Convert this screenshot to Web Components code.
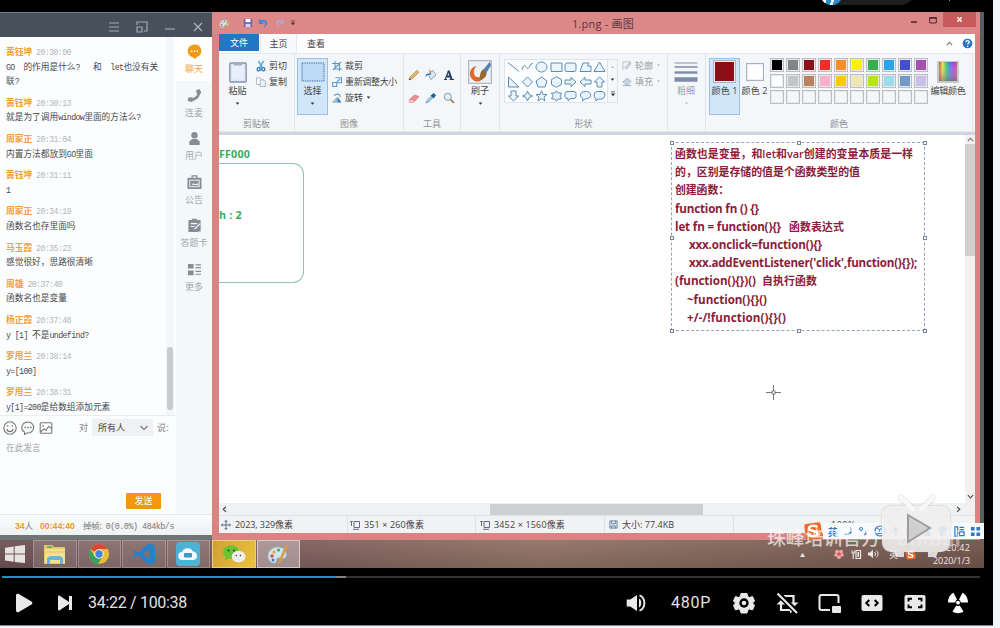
<!DOCTYPE html>
<html lang="zh-CN">
<head>
<meta charset="utf-8">
<title>课程回放</title>
<style>
html,body{margin:0;width:1000px;height:628px;overflow:hidden;background:#f3f4f8}
body{font-family:"Open Sans","Noto Sans CJK SC",sans-serif}
</style>
</head>
<body>
<video-player></video-player>
<script>
const make = (name, css, html) => customElements.define(name, class extends HTMLElement {
  constructor() {
    super();
    this.attachShadow({mode: 'open'});
  }
  connectedCallback() {
    if (this.shadowRoot.childNodes.length) return;
    const t = document.createElement('template');
    t.innerHTML = '<style>*{box-sizing:border-box}' + css + '</style>' + (typeof html === 'function' ? html(this) : html);
    this.shadowRoot.append(t.content.cloneNode(true));
  }
});

/* ---------- icons: [viewBox width, viewBox height, markup] ---------- */
const G = '#868d95', B = '#5b9ac9', W = '#e9e9e9', S = '#5a8db5';
const ICONS = {
  menu: [12,12,'<path d="M1 2h10M1 6h10M1 10h10" stroke="#a4a9b0" stroke-width="1.2"/>'],
  pop: [12,12,'<path d="M1 4V1h10v9H8M1 6h5v5H1z" fill="none" stroke="#a4a9b0" stroke-width="1.2"/>'],
  min: [12,12,'<path d="M1 8h10" stroke="#a4a9b0" stroke-width="1.2"/>'],
  close: [12,12,'<path d="M2 2l8 8M10 2l-8 8" stroke="#b4b8be" stroke-width="1.1"/>'],
  chat: [16,16,'<path d="M8 .5a7.3 6.9 0 0 1 2.7 13.3L8.5 16l-2.600-2A7.300 6.900 0 0 1 8 .5z" fill="#f09a1c"/><g fill="#fff"><circle cx="5" cy="7.500" r=".9"/><circle cx="8" cy="7.500" r=".9"/><circle cx="11" cy="7.500" r=".9"/></g>'],
  phone: [16,16,'<path d="M12.500 4C13 9 9 12.500 3.500 12.500" fill="none" stroke="'+G+'" stroke-width="3"/><path d="M9.800 2.500l3.500-1.500 1.900 3.500-1 2-4-.8zM5.800 9.800l.7 4.200-2.500 1L.7 13.700 1.500 10z" fill="'+G+'"/>'],
  user: [16,16,'<circle cx="8" cy="4.500" r="3.400" fill="'+G+'"/><path d="M5.500 8.500h5l3 2.500v4h-11v-4z" fill="'+G+'"/>'],
  notice: [16,16,'<path d="M5.500 3.500V1h5v2.500" fill="none" stroke="'+G+'" stroke-width="1.300"/><rect x=".5" y="3" width="15" height="12" rx="1" fill="'+G+'"/><rect x="3" y="5.500" width="10" height="7" fill="none" stroke="#f3f8fa"/><path d="M5 10.500l2-2 1.500 1.500 2-1h1.500v2z" fill="#f3f8fa"/>'],
  card: [16,16,'<path d="M1.500 2h4V.8h5V2h4v6l-3 7h-10z" fill="'+G+'"/><path d="M4 6h7M4 9h4M8 12l6-6" stroke="#f3f8fa" stroke-width="1.200"/><path d="M9.500 13l5-5v6.500h-6z" fill="'+G+'"/>'],
  more: [16,16,'<path d="M1 2h6v5H1zM1 9h6v5H1z" fill="'+G+'"/><path d="M9 3h6M9 6h6M9 10h6M9 13h6" stroke="'+G+'" stroke-width="1.200"/>'],
  smile: [14,14,'<g fill="none" stroke="#777" stroke-width="1.100"><circle cx="7" cy="7" r="6.200"/><path d="M3.800 8a3.300 3.300 0 0 0 6.400 0"/><path d="M4.800 4v1.700M9.200 4v1.700"/></g>'],
  bubble: [14,14,'<path d="M7 1a6.200 5.500 0 1 1-1 11L3.500 13.300V11A6.200 5.500 0 0 1 7 1z" fill="none" stroke="#777" stroke-width="1.100"/><path d="M3.500 6.500h1.500M6.300 6.500h1.500M9.100 6.500h1.500" stroke="#777" stroke-width="1.300"/>'],
  picture: [14,14,'<rect x="1.200" y="1.800" width="11.600" height="10.400" rx="1" fill="none" stroke="#777" stroke-width="1.100"/><path d="M1.500 11l3.500-3 2 1.300 2.500-3.800L13 7.500M4 4v2" fill="none" stroke="#777" stroke-width="1.100"/>'],
  chev: [8,6,'<path d="M.5 1l3.500 3.500L7.500 1" fill="none" stroke="#777" stroke-width="1.100"/>'],
  palette: [22,22,'<path d="M11 4C5 4 1 8 1 13s4 8 7 7 0-4 3-5 4 2 7 0 2-11-7-11z" fill="#cfe4ef" stroke="#8fb2c4" stroke-width=".7"/><circle cx="5" cy="13" r="1.700" fill="#d44"/><circle cx="7" cy="9" r="1.600" fill="#e8a52b"/><circle cx="11.500" cy="7" r="1.600" fill="#4aa84a"/><circle cx="6" cy="17" r="1.500" fill="#47a"/><path d="M19 1l2 2-7 16-3 2 1-4z" fill="#d89b4e"/>'],
  save: [12,12,'<path d="M1 1h10v10H1z" fill="#7460ad"/><path d="M3 1h6v4H3z" fill="#fff"/><path d="M3 7h6v4H3z" fill="#d9d2ec"/>'],
  undo: [12,12,'<path d="M1 1v5.500h5.500L4.700 4.700C7.500 3 9.500 6 6 10.500c6-3 5-10-3-8z" fill="#3f86cf"/>'],
  redo: [12,12,'<path d="M11 1v5.500H5.500l1.800-1.800C4.500 3 2.500 6 6 10.500c-6-3-5-10 3-8z" fill="#b5a6c6"/>'],
  drop: [6,4,'<path d="M.8.7h4.400L3 3.300z" fill="#333"/>'],
  dropg: [6,4,'<path d="M1.200.7h3.600L3 2.800z" fill="#aaa"/>'],
  dropbar: [7,7,'<path d="M1.500 1h4" stroke="#444"/><path d="M1 3h5L3.500 6z" fill="#333"/>'],
  wmin: [8,8,'<path d="M1 6h6" stroke="#55282b" stroke-width="1.600"/>'],
  wmax: [8,8,'<path d="M.7 1.500h6.600v5.500H.7z" fill="none" stroke="#55282b"/><path d="M.5 2h7" stroke="#55282b" stroke-width="1.600"/>'],
  wclose: [8,8,'<path d="M1.500 1.500l5 5M6.500 1.500l-5 5" stroke="#fff" stroke-width="1.600"/>'],
  up: [8,6,'<path d="M1 4.700L4 1.500l3 3.200" fill="none" stroke="#777" stroke-width="1.200"/>'],
  down: [8,6,'<path d="M1 1.300L4 4.500l3-3.200" fill="none" stroke="#555" stroke-width="1.300"/>'],
  left: [6,8,'<path d="M4.700 1L1.500 4l3.200 3" fill="none" stroke="#444" stroke-width="1.400"/>'],
  right: [6,8,'<path d="M1.300 1L4.500 4 1.300 7" fill="none" stroke="#444" stroke-width="1.400"/>'],
  help: [12,12,'<circle cx="6" cy="6" r="5.300" fill="#2a74bf"/><path d="M4.300 4.700C4.300 2.300 8 2.500 7.800 4.500 7.700 5.600 6.100 5.700 6.100 7.200M6.100 8.400v1.300" fill="none" stroke="#fff" stroke-width="1.400"/>'],
  paste: [18,22,'<rect x=".8" y="2" width="16.400" height="19" rx="1" fill="#dbe4f3" stroke="#8793ad" stroke-width="1.300"/><rect x="3" y="4.500" width="12" height="14" fill="#e8effa"/><path d="M5 1h8v3.500H5z" fill="#a5aec2"/>'],
  cut: [10,12,'<path d="M2.500 1l4 7M7.500 1l-4 7" stroke="#54a3da" stroke-width="1.500"/><circle cx="2.700" cy="9.300" r="1.600" fill="none" stroke="#2a78b4" stroke-width="1.300"/><circle cx="7.300" cy="9.300" r="1.600" fill="none" stroke="#2a78b4" stroke-width="1.300"/>'],
  copy: [12,12,'<path d="M.7 1h4.500l1.500 2v6h-6z" fill="#fff" stroke="#8d9aac" stroke-width=".8"/><path d="M5 3.500h4.500L11.300 5.500v6H5z" fill="#eef3fa" stroke="#8d9aac" stroke-width=".8"/>'],
  select: [24,20,'<rect x="1" y="1" width="22" height="18" fill="#bcd9f6" stroke="#4977ae" stroke-dasharray="1.500 .8"/>'],
  crop: [10,10,'<path d="M3 0v8h7M0 2.500h7.500V10M1 9L9 1" fill="none" stroke="'+B+'" stroke-width="1.100"/>'],
  resize: [10,10,'<path d="M3.500.7h6v5h-4M.7 5.500h4v4h-4zM5 5l3-3" fill="none" stroke="'+B+'" stroke-width="1.100"/>'],
  rotate: [10,10,'<path d="M.5 9.200L5 4.500v4.700z" fill="#a9c9df" stroke="#6d93ae" stroke-width=".6"/><path d="M5.500 9.500V4L9.500 9.500z" fill="#2e79b5"/><path d="M2 2.500C5 0 8 1 8.300 4" fill="none" stroke="'+B+'" stroke-width="1.200"/>'],
  pencil: [12,12,'<path d="M1 11l1.300-3.500L9 1.200l2 2-6.700 6.500z" fill="#e7b568" stroke="#a37b3d" stroke-width=".6"/><path d="M1 11l.6-1.800L3 10.400z" fill="#333"/>'],
  fill: [12,12,'<path d="M3 5l5-3.500 3 4.500-5 4.500z" fill="#dce8f2" stroke="#7690a6" stroke-width=".8"/><path d="M.5 8c0-4 3-4.500 6-2L3 6z" fill="#2f80c5"/><path d="M6 5L4.500.8" stroke="#b56a3c"/>'],
  letter: [12,12,'<path d="M1 10.500h3M6.500 10.500H11M2.500 10L5.500 2" fill="none" stroke="#223d60" stroke-width="1.200"/><path d="M5.500 1.500l3.200 9M3.800 7.500h4" fill="none" stroke="#223d60" stroke-width="2"/>'],
  eraser: [12,12,'<path d="M1 8l5.500-5 4.500 1.500L6 10 1.500 10.500z" fill="#eb8f8f" stroke="#c86868" stroke-width=".6"/><path d="M1 8l4.500.3.500 1.900-4.500.3z" fill="#f7caca"/>'],
  picker: [12,12,'<path d="M1 11l1-2.500 4-4 1.500 1.500-4 4z" fill="#a4d1ef" stroke="#547c99" stroke-width=".6"/><path d="M5.500 3.500l3 3L11 3.500 8.800 1z" fill="#265f98"/>'],
  zoom: [12,12,'<circle cx="4.800" cy="4.800" r="3.600" fill="#deeefa" stroke="#8b9aa8"/><path d="M7.500 7.500L11 11" stroke="#a57547" stroke-width="1.700"/>'],
  brush: [24,24,'<rect x=".7" y=".7" width="22.600" height="22.600" fill="#edf2f7" stroke="#a2a9b2"/><path d="M8 6C1 8 0 16 5 20c5 3.500 10 1 10-5-3 3-7 3-8.500 0C5 12 6 9 8.500 6z" fill="#dd6a2b"/><path d="M22 1.500l1 4-5 8-3.500-3z" fill="#5b82ad"/><path d="M14.500 9.500l4 3.500c0 4-3 6.500-6.500 7-.5-4 0-8 2.500-10.500z" fill="#98692f"/>'],
  outline: [12,11,'<path d="M1 1h9L1 10z" fill="#f2f5f8" stroke="#b4bbc4"/><path d="M4 9l6-7 1.300 1L5.500 10z" fill="#cfd4da" stroke="#a8afb8" stroke-width=".6"/>'],
  fillg: [12,11,'<path d="M1 6l5-4.500 5 3.500-4.500 5z" fill="#c7d2e0" stroke="#99a5b8" stroke-width=".8"/><path d="M1 10.200h10" stroke="#a9b4c6" stroke-width="1.500"/>'],
  widths: [24,20,'<path d="M.5 1h23" stroke="#8592ad"/><path d="M.5 5h23" stroke="#8592ad" stroke-width="1.600"/><path d="M.5 10.500h23" stroke="#7d8bab" stroke-width="2.400"/><path d="M.5 17.500h23" stroke="#7d8bab" stroke-width="4.500"/>'],
  move: [10,10,'<path d="M5 .5v9M.5 5h9M3.700 2L5 .5 6.300 2M3.700 8L5 9.500 6.300 8M2 3.700L.5 5 2 6.300M8 3.700L9.500 5 8 6.300" fill="none" stroke="#50617a" stroke-width=".9"/>'],
  size: [10,10,'<path d="M.2 1.500h2.600M1.500 1.500V6M4 1.500h5.500v6H4zM3 9.300h6" fill="none" stroke="#50617a" stroke-width=".9"/>'],
  disk: [10,10,'<path d="M1 1h8v8H1zM3 1v3h4V1M3 9V6.500h4V9" fill="#dde8f2" stroke="#55708f" stroke-width=".9"/>'],
  cross: [15,15,'<path d="M7.500 0v15M0 7.500h15" stroke="#777"/><rect x="6" y="6" width="3" height="3" fill="#fff" stroke="#666" stroke-width=".8"/>'],
  win: [20,18,'<path d="M0 2.700l8.700-1.300v7.200H0zM9.700 1.200L20 0v8.600H9.700zM0 9.600h8.700v7.200L0 15.500zM9.700 9.600H20V18L9.700 16.900z" fill="#e6e3e2"/>'],
  folder: [24,22,'<path d="M1 2h8l2 2h11v17H1z" fill="#e3c968"/><path d="M2 6h20v14H2z" fill="#f4e08d"/><path d="M4 3h5v2H4z" fill="#71b36a"/><path d="M4 21v-6l3-2h10l3 2v6h-3v-4H7v4z" fill="#67b5df"/><path d="M2 9h20" stroke="#dfc36c"/>'],
  chrome: [24,24,'<circle cx="12" cy="12" r="11" fill="#e9bf31"/><path d="M12 12L2.500 6.500A11 11 0 0 1 21.500 6.500H12z" fill="#d9493b"/><path d="M2.500 6.500A11 11 0 0 0 11 23l5-8.500-8.800.3z" fill="#3ba158"/><circle cx="12" cy="12" r="5.200" fill="#f1f1f1"/><circle cx="12" cy="12" r="4" fill="#4384df"/>'],
  code: [24,24,'<path d="M17 1l6 2.500v17L17 23 6 13l-4 3-1.500-1.300L4 12 .5 9.300 2 8l4 3zM17 7l-6 5 6 5z" fill="#2481ca"/>'],
  cloud: [24,24,'<rect width="24" height="24" rx="4" fill="#4cb3d6"/><path d="M6.500 18a4 4 0 0 1-.5-8 6 6 0 0 1 11-.5A4.300 4.300 0 0 1 17.500 18z" fill="#f1f9fc"/><rect x="8" y="11" width="8" height="4.500" rx="1" fill="#4397bc"/>'],
  wechat: [26,20,'<ellipse cx="10" cy="7.500" rx="9" ry="7.300" fill="#69c430"/><path d="M4 12l-1 5 5-3z" fill="#69c430"/><ellipse cx="18" cy="12.500" rx="7.500" ry="6.300" fill="#eee"/><g fill="#333"><circle cx="7" cy="6" r="1.100"/><circle cx="13" cy="6" r="1.100"/><circle cx="15.500" cy="11.500" r=".8"/><circle cx="20" cy="11.500" r=".8"/></g>'],
  play: [18,20,'<path d="M1 2.500C1 1 2.500.3 3.800 1L16.500 8.500c1.200.8 1.200 2.200 0 3L3.800 19C2.500 19.700 1 19 1 17.500z" fill="'+W+'"/>'],
  next: [16,16,'<path d="M1 1.500C1 .7 2 .3 2.700.8L12 7V1h3v14h-3V9l-9.300 6.200c-.7.500-1.700.1-1.700-.7z" fill="'+W+'"/>'],
  vol: [20,20,'<path d="M.7 6.500h3.500L11 2v16L4.200 13.500H.7z" fill="'+W+'"/><path d="M13 5.500c3 1.500 3 7.500 0 9z" fill="'+W+'"/><path d="M13.500 2.300c6.500 2.500 6.500 12.900 0 15.400" fill="none" stroke="'+W+'" stroke-width="1.900"/>'],
  gear: [22,22,'<path d="M8 1.500h6l.8 3 1.700 1 3-1 2 4.500-2 2 2 2.500-2 4.500-3-1-1.700 1-.8 3H8l-.8-3-1.700-1-3 1-2-4.500 2-2.500-2-2 2-4.500 3 1 1.700-1z" fill="'+W+'" stroke="'+W+'" stroke-linejoin="round"/><circle cx="11" cy="11" r="4.700" fill="#000"/><circle cx="11" cy="11" r="2.300" fill="'+W+'"/>'],
  loop: [24,22,'<path d="M7 4h10.500v8M15.500 18H5v-6" fill="none" stroke="'+W+'" stroke-width="2.200"/><path d="M13 10.500h9.500L17.800 15zM.5 12.500h9L5 8zM14 21.500v-7l4 3.500z" fill="'+W+'"/><path d="M2 1.500l19 19" stroke="#000" stroke-width="5.500"/><path d="M1.500 1.500l19.500 19.500" stroke="'+W+'" stroke-width="2.200"/>'],
  pip: [24,20,'<path d="M12 17H3.500C2 17 1.500 16.500 1.500 15V4c0-1.500.5-2 2-2h15c1.500 0 2 .5 2 2v6" fill="none" stroke="'+W+'" stroke-width="2"/><rect x="14" y="13" width="9" height="7" rx="1" fill="'+W+'"/>'],
  wide: [22,18,'<rect x=".5" y="1" width="21" height="16" rx="2" fill="'+W+'"/><path d="M8.300 6L5.300 9 8.300 12M13.700 6L16.700 9 13.700 12" fill="none" stroke="#000" stroke-width="2"/>'],
  full: [22,18,'<rect x=".5" y="1" width="21" height="16" rx="2" fill="'+W+'"/><path d="M4.500 7.500V4.700H8M14 4.700h3.500v2.800M17.500 10.500v2.800H14M8 13.300H4.500v-2.800" fill="none" stroke="#000" stroke-width="1.900"/>'],
  nuke: [22,22,'<path d="M1 10.500C1 6 3.500 2 6.500.8L10 7.500a3.500 3.500 0 0 0-1.700 3zM21 10.500C21 6 18.500 2 15.500.8L12 7.500a3.500 3.500 0 0 1 1.700 3zM9.300 13.500L5.500 19.500c3 2.300 8 2.300 11 0L12.700 13.500q-1.700 1-3.400 0z" fill="#fff"/><circle cx="11" cy="10.700" r="1.900" fill="#fff"/>'],
  sogou: [20,20,'<rect x="2" y="2" width="16.500" height="16.500" rx="2" transform="rotate(-8 10 10)" fill="#ee6a26"/><path d="M14.500 6C11 4 6 4.500 6 7.500s8.500 2 8.500 5-6 3.500-9.500 1" fill="none" stroke="#fff" stroke-width="2.400"/>'],
  moon: [10,10,'<path d="M7 1c2 4-1 8-6 6.500 2 3 8 2 8-3C9 3 8 1.500 7 1z" fill="#2f79c6"/>'],
  punct: [10,10,'<circle cx="3" cy="3" r="1.500" fill="none" stroke="#2f79c6"/><path d="M7 5.500c1.500 0 1.500 2-.5 3.500" fill="none" stroke="#2f79c6" stroke-width="1.400"/>'],
  face: [12,12,'<circle cx="6" cy="6" r="5" fill="none" stroke="#2f79c6" stroke-width="1.200"/><path d="M3 3l3 2-1 2M7 3v2M3.500 8.500h4" fill="none" stroke="#2f79c6"/>'],
  mic: [10,12,'<rect x="3.500" y="1" width="3" height="6" rx="1.500" fill="#2f79c6"/><path d="M1.500 5.500c0 4 7 4 7 0M5 8.500V11" fill="none" stroke="#2f79c6"/>'],
  keys: [12,10,'<rect x=".5" y=".5" width="11" height="9" fill="#2f79c6"/><path d="M2 3h6M2 5.500h6M2 8h6M9.500 2v6" stroke="#dbe9f8"/>'],
  man: [10,12,'<circle cx="5" cy="3" r="2.300" fill="#2f79c6"/><path d="M1 11c0-7 8-7 8 0z" fill="#2f79c6"/>'],
  shirt: [12,12,'<path d="M3.500 1h5L11.500 3 10 5.500 9 5v6H3V5l-1 .5L.5 3z" fill="#4f94d5"/>'],
  doc: [12,12,'<path d="M1 1h3v10H1zM6 1.500h5M6 4h5M6 6.500h5v4H6z" fill="none" stroke="#2f79c6" stroke-width="1.300"/>'],
  apps: [12,12,'<path d="M1 1h4v4H1zM7 1h4v4H7zM1 7h4v4H1zM7 7h4v4H7z" fill="#2f79c6"/>'],
  flower: [10,10,'<g fill="#f2a3a3"><circle cx="3" cy="2.800" r="2"/><circle cx="7" cy="2.800" r="2"/><circle cx="2" cy="6" r="1.800"/><circle cx="8" cy="6" r="1.800"/><circle cx="5" cy="8" r="2"/></g><circle cx="5" cy="5" r="1.600" fill="#d95454"/>'],
  battery: [10,10,'<path d="M5 1.500h4.500v8H5z" fill="none" stroke="#ece7e5" stroke-width="1.200"/><path d="M6.500 3h1.500v5H6.500z" fill="#ece7e5"/><path d="M.5 4h3.500M2.200 4v6M1 1.500V4M3.300 1.500V4" stroke="#ece7e5" stroke-width="1.100"/>'],
  sound: [11,10,'<path d="M0 3.500h2L5 .7v8.600L2 6.500H0z" fill="#ece7e5"/><path d="M6.500 3c1.300 1 1.300 3 0 4M8.300 1.500c2.300 2 2.300 5 0 7" fill="none" stroke="#ece7e5"/>'],
  tv: [70,60,'<g style="filter:drop-shadow(0 0 1px #8888)"><path d="M20 1l12 11M52 1L40 12" stroke="#fff" stroke-width="4.500" stroke-linecap="round" opacity=".85"/><rect x="1" y="9" width="68" height="46" rx="9" fill="#f8f8f8" opacity=".82"/><path d="M13 55h10v5H15zM47 55h10l-2 5h-8z" fill="#fff" opacity=".75"/></g><path d="M27 18L49 31 27 45z" fill="#ccc9c9" opacity=".8" stroke="#8b8b8d" stroke-width="2"/>'],
  colors: [22,22,'<defs><linearGradient id="h"><stop stop-color="#ec3535"/><stop offset=".2" stop-color="#f3e53e"/><stop offset=".4" stop-color="#35c860"/><stop offset=".6" stop-color="#3a77ee"/><stop offset=".8" stop-color="#a43ce4"/><stop offset="1" stop-color="#e53a6f"/></linearGradient><linearGradient id="v" x2="0" y2="1"><stop stop-color="#fff" stop-opacity="0"/><stop offset="1" stop-color="#777" stop-opacity=".7"/></linearGradient></defs><rect width="22" height="22" fill="#c7cacd"/><rect x="2" y="1" width="18" height="19" fill="url(#h)"/><rect x="2" y="1" width="18" height="19" fill="url(#v)"/>']
};
make('ui-icon', ':host{display:block;flex:none;line-height:0}svg{display:block;overflow:visible}', e => {
  const [w, h, m] = ICONS[e.getAttribute('name')];
  const s = e.getAttribute('size') || w;
  return `<svg width="${s}" height="${h * s / w}" viewBox="0 0 ${w} ${h}">${m}</svg>`;
});

/* ---------- chat ---------- */
make('chat-message', `:host{display:block;margin-bottom:7px;color:#484b4e;font-size:8.7px;line-height:14.6px}
p{margin:0;white-space:pre;height:14.6px}b{color:#f0a13a;font-weight:600}
time{color:#b3b6ba;margin-left:4px}.m{font:8.300px/14px "Liberation Mono",monospace;letter-spacing:-.63px}`,
  e => `<p><b>${e.getAttribute('who')}</b><time class="m">${e.getAttribute('at')}</time></p>` +
    e.getAttribute('text').split('|').map(l => '<p>' + l.replace(/[ -~]+/g, s => `<span class="m">${s}</span>`) + '</p>').join(''));

make('side-tab', `:host{display:flex;flex-direction:column;align-items:center;height:43.5px;padding-top:7px;font-size:9px;line-height:12px;color:#a4a9ae;gap:4px}
:host([on]){background:#fff;color:#f0a13a}`, e => `<ui-icon name="${e.getAttribute('icon')}" size="15"></ui-icon><slot></slot>`);

make('chat-panel', `:host{display:flex;flex-direction:column;height:528px;width:212px;background:#fcfdfe;border-bottom:5px solid #6c7675;font-family:"Noto Sans CJK SC",sans-serif}
header{height:25px;background:#48505b;border-top:1px solid #708087;display:flex;justify-content:flex-end;align-items:center;gap:16px;padding:3px 8px 0 0;flex:none}
.mid{display:flex;height:477px;flex:none}
.main{width:176px;flex:none;display:flex;flex-direction:column}
.list{height:379px;display:flex;border-bottom:1px solid #e9ebed;overflow:hidden}
.msgs{width:166px;flex:none;padding:8px 0 0 6px}
.track{width:8px;background:#f4f6f7;padding:310px 1px 0}
.track i{display:block;width:6px;height:63px;border-radius:3px;background:#c9cbcd}
.bar{display:flex;align-items:center;height:23px;padding-left:3px;gap:4px;font-size:9px;color:#888;white-space:nowrap}
.sel{background:#f0f1f3;color:#444;width:61px;height:17px;display:flex;align-items:center;justify-content:space-between;padding:0 5px 0 6px}
.hint{font-size:8.700px;line-height:14px;color:#a0a3a6;padding:2px 0 0 6px;flex:1}
.send{align-self:flex-end;width:35px;height:16px;margin:0 15px 5px 0;background:#f4960f;border-radius:1px;color:#fff;font-size:9px;line-height:15px;text-align:center}
nav{width:36px;background:#f3f8fa}
footer{flex:1;background:linear-gradient(#fafcfd,#eef1f2);border-top:1px solid #e6eaec;display:flex;align-items:center;font-size:8.500px;color:#777;padding-left:15px;white-space:pre}
footer b{color:#f09a2c;font-family:"Liberation Sans",sans-serif;font-size:8.800px}.m{font-family:"Liberation Mono",monospace;font-size:8.300px}`,
`<header><ui-icon name="menu"></ui-icon><ui-icon name="pop"></ui-icon><ui-icon name="min"></ui-icon><ui-icon name="close"></ui-icon></header>
<div class="mid"><div class="main"><div class="list"><div class="msgs">
<chat-message who="黄钰坤" at="20:30:00" text="GO  的作用是什么?   和  let也没有关|联?"></chat-message>
<chat-message who="黄钰坤" at="20:30:13" text="就是为了调用window里面的方法么?"></chat-message>
<chat-message who="周家正" at="20:31:04" text="内置方法都放到GO里面"></chat-message>
<chat-message who="黄钰坤" at="20:31:11" text="1"></chat-message>
<chat-message who="周家正" at="20:34:19" text="函数名也存里面吗"></chat-message>
<chat-message who="马玉霞" at="20:35:23" text="感觉很好，思路很清晰"></chat-message>
<chat-message who="周雄" at="20:37:40" text="函数名也是变量"></chat-message>
<chat-message who="杨正霞" at="20:37:48" text="y [1] 不是undefind?"></chat-message>
<chat-message who="罗甩兰" at="20:38:14" text="y=[100]"></chat-message>
<chat-message who="罗甩兰" at="20:38:31" text="y[1]=200是给数组添加元素"></chat-message>
</div><div class="track"><i></i></div></div>
<div class="bar"><ui-icon name="smile"></ui-icon><ui-icon name="bubble"></ui-icon><ui-icon name="picture"></ui-icon><span style="margin-left:22px">对</span><div class="sel">所有人<ui-icon name="chev"></ui-icon></div><fit-text w="12">说:</fit-text></div>
<div class="hint">在此发言</div><div class="send">发送</div></div>
<nav><side-tab on icon="chat">聊天</side-tab><side-tab icon="phone">连麦</side-tab><side-tab icon="user">用户</side-tab><side-tab icon="notice">公告</side-tab><side-tab icon="card">答题卡</side-tab><side-tab icon="more">更多</side-tab></nav></div>
<footer><fit-text w="18"><b>34</b>人</fit-text><fit-text w="35" style="margin-left:7px"><b>00:44:40</b></fit-text><fit-text w="91" style="margin-left:8px">掉帧:<span class="m"> 0(0.0%) 484kb/s</span></fit-text></footer>`);

/* ---------- paint window ---------- */
make('ribbon-group', `:host{display:flex;flex-direction:column;height:78px;border-right:1px solid #e1e5ea;flex:none;position:relative}
.c{height:60px;padding-top:4px;display:flex;align-items:flex-start}.l{height:16px;line-height:19px;color:#8d9196;text-align:center}`,
e => `<style>:host{width:${e.getAttribute('w')}px}</style><div class="c"><slot></slot></div><div class="l"><span>${e.getAttribute('label') || ''}</span></div>`);

make('big-tool', `:host{display:flex;flex-direction:column;align-items:center;height:57px;flex:none;color:#444;border:1px solid transparent}
:host([on]){background:#d2e6fa;border-color:#97c0ea}:host([dim]){color:#9a9fa5}.i{height:25px;display:flex;align-items:center}span{line-height:14px;white-space:nowrap}ui-icon.d{margin-top:4px}`,
e => `<div class="i"><slot name="i"></slot></div><span><slot></slot></span>${e.hasAttribute('drop') ? `<ui-icon class="d" name="${e.hasAttribute('dim') ? 'dropg' : 'drop'}" size="5"></ui-icon>` : ''}`);

make('small-tool', `:host{display:flex;align-items:center;height:16px;gap:3px;white-space:nowrap;color:#444}:host([dim]){color:#9a9fa5}`,
e => `<ui-icon name="${e.getAttribute('icon')}" size="10"></ui-icon><slot></slot>${e.hasAttribute('drop') ? `<ui-icon name="${e.hasAttribute('dim') ? 'dropg' : 'drop'}" size="5"></ui-icon>` : ''}`);

const SHAPES = ['M1 1.500L12 10.500','M1 9C4-3 6 14 9 4L12 2','M6.500 1a5.500 5 0 1 0 .01 0z','M1 2h11v8.500H1z','M3 2h7q2 0 2 2v4.500q0 2-2 2H3q-2 0-2-2V4q0-2 2-2z','M1 10.500L4 2h6L8.500 5H12v5.500z','M6.500 1L12 10.500H1z',
'M1.500 1L12 11H1.500z','M6.500 1L11.500 6 6.500 11 1.500 6z','M6.500 1L12 5 10 11H3L1 5z','M6.500 .7L11.500 3.500v5L6.500 11.300 1.500 8.500v-5z','M1 4h6V1.300L12 6 7 10.700V8H1z','M12 4H6V1.300L1 6l5 4.700V8h6z','M4 11V6H1.300L6.500 1 11.700 6H9v5z',
'M4 1v5H1.300L6.500 11 11.700 6H9V1z','M6.500 1L8 4.500 11.500 6 8 7.500 6.500 11 5 7.500 1.500 6 5 4.500z','M6.500 .8L8 4.500h4L9 7l1 4-3.500-2.300L3 11l1-4-3-2.500h4z','M6.500 .8L8 3h3.500L10 6l1.500 3H8l-1.500 2.200L5 9H1.500L3 6 1.500 3H5z','M3 1.500h7q2 0 2 2v3q0 2-2 2H6.500L4 11V8.500H3q-2 0-2-2v-3q0-2 2-2z','M6.500 1.300a5.500 3.800 0 1 1-.5 7.600L3.500 11l.3-2.700a5.500 3.800 0 0 1 2.700-7z','M4 1.500h5q3 .5 3 3.500t-3 4L5 9l-2 2V8.500Q1 8 1 5t3-3.500z'];
make('shape-grid', `:host{display:grid;grid-template-columns:repeat(7,14.400px);grid-auto-rows:14.500px;border:1px solid #dde3e9;background:#fbfdfe;width:104px;height:44px;padding:0 0 0 1px;place-items:center;flex:none}svg{display:block}`,
  SHAPES.map(d => `<svg width="13" height="12" viewBox="0 0 13 12"><path d="${d}" fill="${d === SHAPES[0] || d === SHAPES[1] ? 'none' : '#eaf4fc'}" stroke="${S}" stroke-width="1"/></svg>`).join(''));

const PAL = ['#000','#838485','#8b101a','#e53329','#f58d2b','#fdf101','#36b04f','#2aa3e8','#4550cf','#a550ae','#fff','#c5c5c5','#bc8160','#f9b0cb','#fbcb0b','#efe6b2','#b6e31d','#9bdbec','#7399c9','#cabfe9'];
make('color-palette', `:host{display:grid;grid-template-columns:repeat(10,14px);grid-auto-rows:14px;gap:2px;flex:none}i{border:1px solid #bcc0c5;padding:0;box-shadow:inset 0 0 0 1px #e6e8ea}`,
  PAL.map(c => `<i style="background:${c}"></i>`).join('') + '<i></i>'.repeat(10));

make('swatch-box', `:host{display:block;border:1px solid #a9b3c0;box-shadow:inset 0 0 0 1px #eef}`, e => `<style>:host{width:${e.getAttribute('s')}px;height:${e.getAttribute('s')}px;background:${e.getAttribute('c')}}</style>`);

make('paint-ribbon', `:host{display:flex;height:78px;background:#f4f7f9;border-top:1px solid #e4e8ec;font-size:9px;line-height:14px}
.col{display:flex;flex-direction:column}.tools{display:grid;grid-template-columns:repeat(3,17.500px);grid-auto-rows:23px;place-items:center;padding:5px 4px 0 1px}
.scroll{width:10px;height:44px;border:1px solid #dde3e9;border-left:0;display:flex;flex-direction:column;align-items:center;justify-content:space-around}`,
`<ribbon-group w="76" label="剪贴板"><big-tool drop style="width:37px"><ui-icon slot="i" name="paste"></ui-icon>粘贴</big-tool><div class="col"><small-tool icon="cut">剪切</small-tool><small-tool icon="copy">复制</small-tool></div></ribbon-group>
<ribbon-group w="109" label="图像"><big-tool on drop style="width:31px;margin:0 4px 0 2px"><ui-icon slot="i" name="select"></ui-icon>选择</big-tool><div class="col"><small-tool icon="crop">裁剪</small-tool><small-tool icon="resize"><fit-text w="52">重新调整大小</fit-text></small-tool><small-tool icon="rotate" drop>旋转</small-tool></div></ribbon-group>
<ribbon-group w="57" label="工具"><div class="tools"><ui-icon name="pencil"></ui-icon><ui-icon name="fill"></ui-icon><ui-icon name="letter"></ui-icon><ui-icon name="eraser"></ui-icon><ui-icon name="picker"></ui-icon><ui-icon name="zoom"></ui-icon></div></ribbon-group>
<ribbon-group w="39"><big-tool drop style="width:38px"><ui-icon slot="i" name="brush"></ui-icon>刷子</big-tool></ribbon-group>
<ribbon-group w="168" label="形状"><shape-grid style="margin:1px 0 0 4px"></shape-grid><div class="scroll" style="margin-top:1px"><ui-icon name="dropg" size="5" style="transform:scaleY(-1)"></ui-icon><ui-icon name="drop" size="5"></ui-icon><ui-icon name="dropbar" size="6"></ui-icon></div><div class="col" style="margin-left:4px"><small-tool dim drop icon="outline">轮廓</small-tool><small-tool dim drop icon="fillg">填充</small-tool></div></ribbon-group>
<ribbon-group w="38"><big-tool dim drop style="width:36px"><ui-icon slot="i" name="widths"></ui-icon>粗细</big-tool></ribbon-group>
<ribbon-group w="267" label="颜色"><big-tool on style="width:31px;margin-left:3px"><swatch-box slot="i" s="23" c="#8c0f18"></swatch-box><fit-text w="26">颜色 1</fit-text></big-tool><big-tool style="width:29px"><swatch-box slot="i" s="18" c="#fff"></swatch-box><fit-text w="26">颜色 2</fit-text></big-tool><color-palette style="margin:0 1px 0 1px"></color-palette><big-tool style="width:38px"><ui-icon slot="i" name="colors"></ui-icon><fit-text w="35">编辑颜色</fit-text></big-tool></ribbon-group>`);

make('note-box', `:host{display:block;position:absolute;left:452px;top:7px;width:254px;height:189px;border:1px dashed #94a4b8;color:#8c1c3a;font:600 10.900px/18.200px "Open Sans","Noto Sans CJK SC",sans-serif;padding:2px 0 0 3px}
p{margin:0;height:18.200px;white-space:pre;display:flex}.e{font-size:11.600px;font-weight:700}i{position:absolute;width:4px;height:4px;border:1px solid #76869a;background:#fff}`,
[[-2,-2],[125,-2],[251,-2],[-2,93],[251,93],[-2,186],[125,186],[251,186]].map(([x,y]) => `<i style="left:${x}px;top:${y}px"></i>`).join('') +
`<p><fit-text w="238">函数也是变量，和let和var创建的变量本质是一样</fit-text></p>
<p><fit-text w="185">的，区别是存储的值是个函数类型的值</fit-text></p>
<p><fit-text w="54">创建函数：</fit-text></p>
<p><fit-text class="e" w="84">function fn () {}</fit-text></p>
<p><fit-text class="e" w="106">let fn = function(){}</fit-text><fit-text w="55" style="margin-left:8px">函数表达式</fit-text></p>
<p style="padding-left:14px"><fit-text class="e" w="133">xxx.onclick=function(){}</fit-text></p>
<p style="padding-left:14px"><fit-text class="e" w="228">xxx.addEventListener('click',function(){});</fit-text></p>
<p><fit-text class="e" w="81">(function(){})()</fit-text><fit-text w="55" style="margin-left:6px">自执行函数</fit-text></p>
<p style="padding-left:12px"><fit-text class="e" w="80">~function(){}()</fit-text></p>
<p style="padding-left:12px"><fit-text class="e" w="99">+/-/!function(){}()</fit-text></p>`);

make('paint-window', `:host{display:flex;flex-direction:column;width:772px;height:528px;background:#d98383;border-right:4px solid #50615f;font-family:"Open Sans","Noto Sans CJK SC",sans-serif;font-size:9px;color:#444}
.title{height:22px;display:flex;align-items:center;background:#dd8888;padding-left:7px;flex:none}
.title .q{display:flex;align-items:center;gap:5px;width:353px}
.title .n{font-size:11px;color:#57393d;flex:1}
.wb{display:flex;align-self:flex-start;gap:11px;align-items:center}.x{width:33px;height:15px;background:#c75a5a;display:grid;place-items:center;margin:0 4px 0 -5px}
.body{margin:0 5px 0 7px;display:flex;flex-direction:column;height:499px;background:#fff}
.tabs{display:flex;height:19px;line-height:20px;align-items:stretch;text-align:center;flex:none}
.tabs .f{width:40px;height:17px;line-height:18px;background:#2276c9;color:#fff}.tabs .a{width:37px;background:#f7f9fa;border:1px solid #e6eaee;border-width:0 1px;margin-left:1px}.tabs .b{width:38px}
.rule{height:4px;background:#cdd6e3;flex:none}.rule i{display:block;height:1px;background:#e5eaf1}
.work{display:flex;height:368px}
.canvas{flex:1;position:relative;overflow:hidden;background:#fff;color:#35ae57;font-weight:700}
.lab{font-size:10.700px;line-height:14px}.box{width:85px;height:120px;border:1px solid #8fc7a9;border-left:0;border-radius:0 11px 11px 0;margin-top:2px;padding:44px 0 0}
.v{width:10px;background:#f0f1f2;display:flex;flex-direction:column;align-items:center;padding:2px 0 4px}.v i{width:10px;height:112px;background:#cecfd0;margin:2px 0 auto}
.h{height:12px;background:#f0f1f2;display:flex;align-items:center;padding:0 14px 0 3px;flex:none}.h i{width:213px;height:11px;background:#cecfd0;margin:0 auto 0 263px}
.st{height:18px;background:#f0f2f4;border-top:1px solid #dfe3e6;display:flex;align-items:center;flex:none}
.st div{display:flex;gap:4px;align-items:center;border-right:1px solid #dfe1e4;height:17px;padding-left:2px}
.cross{position:absolute;left:547px;top:250px}`,
`<div class="title"><div class="q"><ui-icon name="palette" size="11"></ui-icon><ui-icon name="save" size="10" style="margin-left:8px"></ui-icon><ui-icon name="undo" size="11"></ui-icon><ui-icon name="redo" size="11"></ui-icon><ui-icon name="dropbar" size="6"></ui-icon></div><span class="n"><fit-text w="62">1.png - 画图</fit-text></span><div class="wb"><ui-icon name="wmin"></ui-icon><ui-icon name="wmax"></ui-icon><div class="x"><ui-icon name="wclose" size="7"></ui-icon></div></div></div>
<div class="body" style="width:756px"><div class="tabs"><div class="f">文件</div><div class="a">主页</div><div class="b">查看</div><span style="flex:1"></span><div style="display:flex;align-items:center;gap:9px;padding-right:2px"><ui-icon name="up" size="7"></ui-icon><ui-icon name="help" size="11"></ui-icon></div></div>
<paint-ribbon></paint-ribbon><div class="rule"><i></i></div>
<div class="work"><div class="canvas"><div class="lab" style="padding-top:12px"><fit-text w="31">FF000</fit-text></div><div class="box lab"><fit-text w="23">h : 2</fit-text></div><note-box></note-box><ui-icon class="cross" name="cross"></ui-icon></div><div class="v"><ui-icon name="up" size="7"></ui-icon><i></i><ui-icon name="down" size="7"></ui-icon></div></div>
<div class="h"><ui-icon name="left" size="5"></ui-icon><i></i><ui-icon name="right" size="5"></ui-icon></div>
<div class="st"><div style="width:129px"><ui-icon name="move"></ui-icon><fit-text w="58">2023, 329像素</fit-text></div><div style="width:128px"><ui-icon name="size"></ui-icon><fit-text w="60">351 × 260像素</fit-text></div><div style="width:129px;padding-left:4px"><ui-icon name="size"></ui-icon><fit-text w="71">3452 × 1560像素</fit-text></div><div style="width:129px;padding-left:4px"><ui-icon name="disk" size="9"></ui-icon><fit-text w="52">大小: 77.4KB</fit-text></div><span style="margin-left:97px"><fit-text w="25">100%</fit-text></span></div></div>`);

/* ---------- taskbar ---------- */
make('task-item', `:host{display:grid;place-items:center;height:28px;width:43.500px;margin-right:1px;background:#ffffff22;border:1px solid #ffffff3a}
:host([flash]){background:linear-gradient(115deg,#cf9f35,#ecc23f);border-color:#ead077}:host([active]){background:#ffffff55;border-color:#ffffff80}`, '<slot></slot>');
make('task-bar', `:host{display:flex;align-items:stretch;height:28px;background:linear-gradient(#ffffff0c,#0000001c),linear-gradient(90deg,#705454,#80605e 30%,#927466 55%,#73564f)}
.s{width:33px;display:grid;place-items:center start;padding-left:5px}
.tray{margin-left:auto;display:flex;align-items:center;color:#efe9e7;font-size:9px;width:186px;gap:7px;padding-left:2px}
.clock{font:9px/13px "Open Sans",sans-serif;text-align:right;margin-left:auto;margin-right:14px}`,
`<div class="s"><ui-icon name="win"></ui-icon></div><task-item><ui-icon name="folder"></ui-icon></task-item><task-item><ui-icon name="chrome" size="22"></ui-icon></task-item><task-item><ui-icon name="code"></ui-icon></task-item><task-item><ui-icon name="cloud"></ui-icon></task-item><task-item flash style="margin-left:1px"><ui-icon name="wechat" size="24"></ui-icon></task-item><task-item active><ui-icon name="palette"></ui-icon></task-item>
<div class="tray"><span style="width:27px;font-size:5px">▲</span><ui-icon name="flower"></ui-icon><ui-icon name="battery"></ui-icon><ui-icon name="sound"></ui-icon><span style="margin-left:3px">英</span><ui-icon name="sogou" size="11"></ui-icon><div class="clock"><fit-text w="24">20:42</fit-text><br><fit-text w="37">2020/1/3</fit-text></div></div>`);

make('ime-bar', `:host{position:absolute;left:803px;top:510px;display:flex;align-items:center;width:181px;height:18px}
.b{flex:1;height:16px;background:#f8fafd;display:flex;align-items:center;justify-content:space-around;color:#2f79c6;font:700 10px/15px "Noto Sans CJK SC",sans-serif;padding-left:2px}`,
`<ui-icon name="sogou"></ui-icon><div class="b"><span>英</span><ui-icon name="moon"></ui-icon><ui-icon name="punct"></ui-icon><ui-icon name="face"></ui-icon><ui-icon name="mic" size="9"></ui-icon><ui-icon name="keys"></ui-icon><ui-icon name="man" size="9"></ui-icon><ui-icon name="shirt" size="11"></ui-icon><ui-icon name="doc" size="11"></ui-icon><ui-icon name="apps" size="11"></ui-icon></div>`);

make('water-mark', `:host{position:absolute;left:767px;top:484px;width:210px;height:75px;color:#ffffffb0;font:500 18.800px/24px "Noto Sans CJK SC",sans-serif}
div{padding-top:29px;display:flex;white-space:nowrap}ui-icon{position:absolute;left:114px;top:1px}.b{font:700 21px/26px "Open Sans",sans-serif;margin-left:16px;color:#ffffff70}`,
`<div><fit-text w="113">珠峰培训官方</fit-text><span class="b">bilibili</span></div><ui-icon name="tv"></ui-icon>`);

/* ---------- player ---------- */
make('player-controls', `:host{display:block;height:57px;color:#e2e2e2;font:16px/22px Roboto,sans-serif}
.p{display:flex;height:2px;margin:8px 13px 0 2px;background:#333}.p i{width:334px;background:#2191b9}.p b{width:10px;background:#858585}
.r{display:flex;align-items:center;height:32px;margin-top:9px;padding-left:15px}`,
`<div class="p"><i></i><b></b></div><div class="r"><ui-icon name="play"></ui-icon><ui-icon name="next" style="margin-left:24px"></ui-icon><fit-text w="99" style="margin-left:15px">34:22 / 100:38</fit-text>
<ui-icon name="vol" style="margin-left:439px"></ui-icon><fit-text w="40" style="margin-left:25px">480P</fit-text><ui-icon name="gear" style="margin-left:22px"></ui-icon><ui-icon name="loop" style="margin-left:21px"></ui-icon><ui-icon name="pip" style="margin-left:18px"></ui-icon><ui-icon name="wide" style="margin-left:19px"></ui-icon><ui-icon name="full" style="margin-left:21px"></ui-icon><ui-icon name="nuke" style="margin-left:21px"></ui-icon></div>`);

make('video-player', `:host{display:block;width:993px;height:625px;background:#000;border-bottom:1px solid #888;position:relative;overflow:hidden}
.top{height:12px}.stage{width:984px;height:556px;position:relative}.wins{display:flex}
.pill{position:absolute;left:820px;top:-24px;width:95px;height:29px;border-radius:15px;background:#1c1e20}
.av{width:23px;height:29px;border-radius:12px;background:linear-gradient(110deg,#fff 45%,#2a8bc8 46% 60%,#e8f5fb 61% 68%,#2a8bc8 69%)}
.tick{position:absolute;left:949px;top:0;width:1px;height:1px;background:#888}`,
`<div class="top"></div><div class="stage"><div class="wins"><chat-panel></chat-panel><paint-window></paint-window></div><task-bar></task-bar><ime-bar></ime-bar><water-mark></water-mark></div><player-controls></player-controls><div class="pill"><div class="av"></div></div><div class="tick"></div>`);

/* Spreads its text to the width given in w, by letter spacing. */
customElements.define('fit-text', class extends HTMLElement {
  constructor() {
    super();
    this.attachShadow({mode: 'open'}).innerHTML = '<style>:host{display:inline-block;white-space:pre;flex:none}</style><slot></slot>';
  }
  connectedCallback() {
    const n = [...this.textContent].length;
    this.style.letterSpacing = (this.getAttribute('w') - this.getBoundingClientRect().width) / n + 'px';
  }
});
</script>
</body>
</html>
